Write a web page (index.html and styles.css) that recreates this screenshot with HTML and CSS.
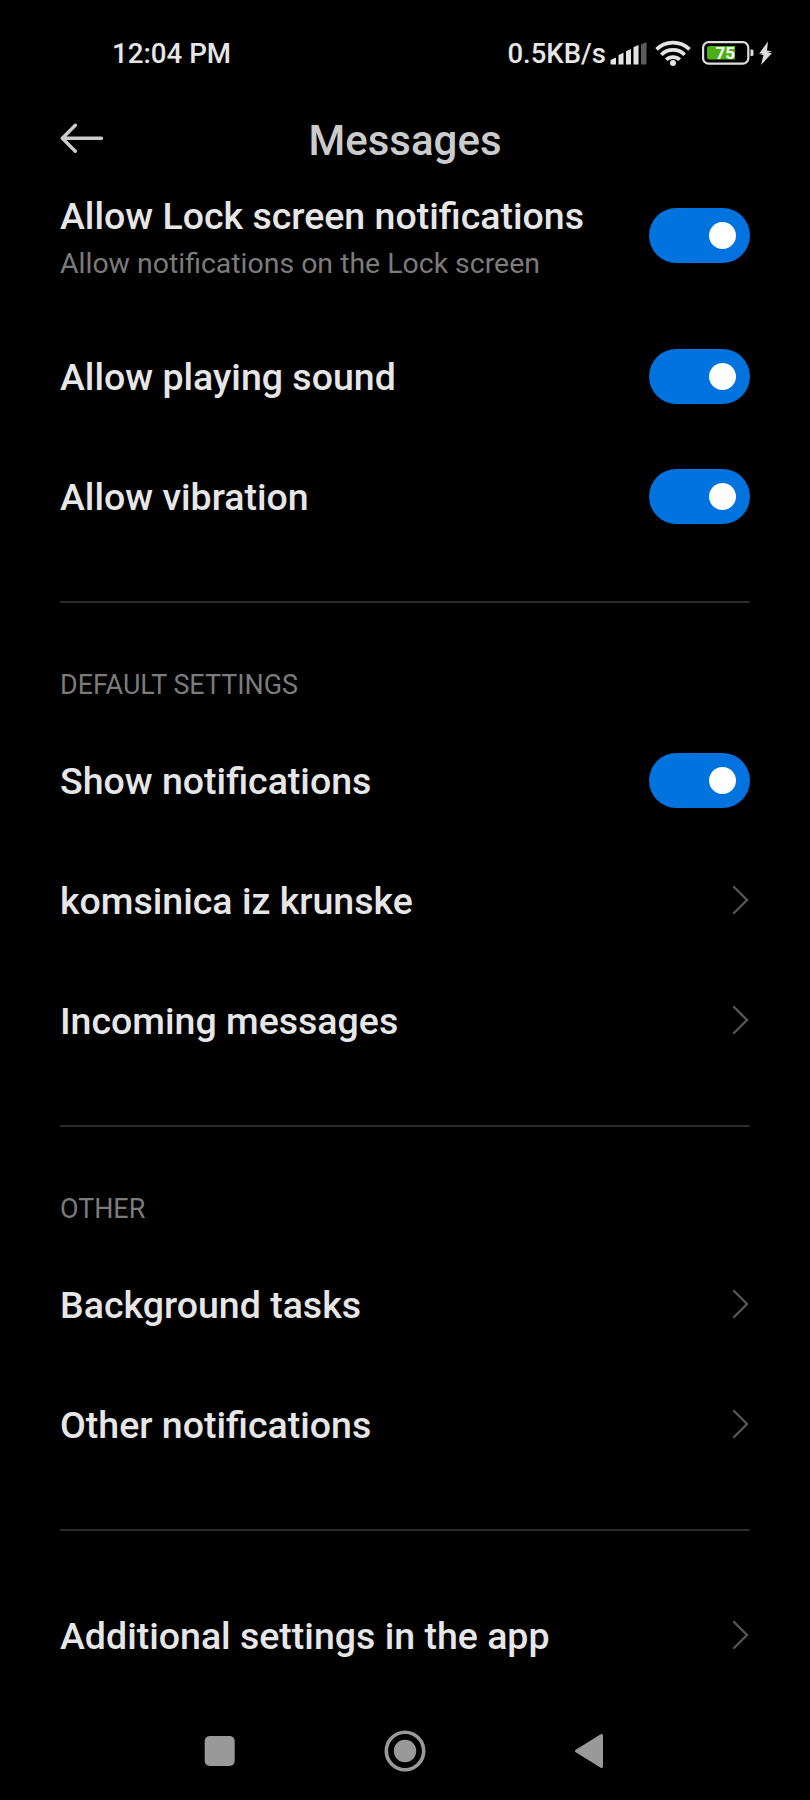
FILE: index.html
```html
<!DOCTYPE html>
<html lang="en">
<head>
<meta charset="utf-8">
<title>Messages</title>
<link rel="stylesheet" href="styles.css">
</head>
<body>
<div class="screen">
  <header class="status">
    <span class="clock">12:04 PM</span>
    <span class="speed">0.5KB/s</span>
    <svg class="signal" width="37" height="24" viewBox="0 0 37 24">
      <g fill="#e4e4e4">
        <path d="M.5 22.500v-3.500l5.500-2.500v7h-4.500a1 1 0 0 1-1-1z"/>
        <path d="M8.500 14l5-2.200v11.700h-5z"/>
        <path d="M16 10.200l5-2.200v15.500h-5z"/>
        <path d="M23.500 6.200l5-2.200v19.500h-5z"/>
      </g>
      <path fill="#5c5c5c" d="M31 3.500l4.500-2q1-.4 1 .8v20.200q0 1-1 1h-4.500z"/>
    </svg>
    <svg class="wifi" width="36" height="28" viewBox="0 0 36 28">
      <g fill="none" stroke="#e4e4e4" stroke-width="3.700">
        <path d="M1.500 10.400a23.500 23.500 0 0 1 33 0"/>
        <path d="M6.300 15.700a16.600 16.600 0 0 1 23.400 0"/>
        <path d="M11.300 20.800a9.500 9.500 0 0 1 13.400 0"/>
      </g>
      <circle cx="18" cy="24" r="3" fill="#e4e4e4"/>
    </svg>
    <svg class="battery" width="72" height="28" viewBox="0 0 72 28">
      <rect x="3.100" y="3.100" width="45.200" height="21.600" rx="5.500" fill="none" stroke="#dedede" stroke-width="2.200"/>
      <path d="M9.500 7h25.500v13.500h-25.500q-2.500 0-2.500-2.500v-8.500q0-2.500 2.500-2.500z" fill="#4caf13"/>
      <text x="25.200" y="20" text-anchor="middle" class="level">75</text>
      <path d="M50.500 10.500h1.500q1.500 0 1.500 1.500v3.500q0 1.500-1.500 1.500h-1.500z" fill="#dedede"/>
      <path d="M68 2.500l-8.500 11.500h4l-5 .8 5 1.200-2.500 10 11-12h-4.500l4.500-1.500-5-1z" fill="#dedede"/>
    </svg>
  </header>

  <div class="bar">
    <svg class="back" width="44" height="32" viewBox="0 0 44 32">
      <path d="M15.300 2.300L2.300 15.300L15.300 28.300M2.300 15.300H41.500" fill="none" stroke="#cbcbcb" stroke-width="3.400" stroke-linecap="round" stroke-linejoin="round"/>
    </svg>
    <h1 class="title">Messages</h1>
  </div>

  <main class="list">
    <section class="group">
      <div class="row row-tall">
        <div class="label">
          <div>Allow Lock screen notifications</div>
          <div class="note">Allow notifications on the Lock screen</div>
        </div>
        <span class="toggle"></span>
      </div>
      <div class="row"><div class="label">Allow playing sound</div><span class="toggle"></span></div>
      <div class="row"><div class="label">Allow vibration</div><span class="toggle"></span></div>
    </section>

    <section class="group">
      <h2 class="heading">DEFAULT SETTINGS</h2>
      <div class="row"><div class="label">Show notifications</div><span class="toggle"></span></div>
      <div class="row"><div class="label">komsinica iz krunske</div><svg class="chevron" viewBox="0 0 18 30"><path d="M2 2l13 13-13 13"/></svg></div>
      <div class="row"><div class="label">Incoming messages</div><svg class="chevron" viewBox="0 0 18 30"><path d="M2 2l13 13-13 13"/></svg></div>
    </section>

    <section class="group">
      <h2 class="heading">OTHER</h2>
      <div class="row"><div class="label">Background tasks</div><svg class="chevron" viewBox="0 0 18 30"><path d="M2 2l13 13-13 13"/></svg></div>
      <div class="row"><div class="label">Other notifications</div><svg class="chevron" viewBox="0 0 18 30"><path d="M2 2l13 13-13 13"/></svg></div>
    </section>

    <section class="group">
      <div class="row"><div class="label">Additional settings in the app</div><svg class="chevron" viewBox="0 0 18 30"><path d="M2 2l13 13-13 13"/></svg></div>
    </section>
  </main>

  <nav class="nav">
    <svg width="42" height="42" viewBox="0 0 42 42"><rect x="5.700" y="6" width="30" height="30" rx="5"/></svg>
    <svg width="42" height="42" viewBox="0 0 42 42"><circle cx="21" cy="21" r="18.700" fill="none" stroke="#999" stroke-width="3.600"/><circle cx="21" cy="21" r="11.200"/></svg>
    <svg width="42" height="42" viewBox="0 0 42 42"><path d="M7.500 21L32.500 5.500V36.500Z" stroke="#999" stroke-width="3" stroke-linejoin="round"/></svg>
  </nav>
</div>
</body>
</html>
```
FILE: styles.css
```css
* { box-sizing: border-box; }

body {
  margin: 0;
  background: #000;
  color: #e6e6e6;
  font-family: Roboto, "Liberation Sans", sans-serif;
}

svg { display: block; flex: none; }

.screen {
  display: flex;
  flex-direction: column;
  width: 810px;
  height: 1800px;
  overflow: hidden;
}

.status {
  display: flex;
  align-items: center;
  height: 90px;
  padding: 16px 38px 0 112px;
  font-size: 27.700px;
  font-weight: 500;
  line-height: 32px;
  white-space: nowrap;
}

.clock,
.speed { padding-top: 2px; }

.speed { margin-left: auto; margin-right: 4px; font-size: 27.500px; }
.signal { margin-right: 8px; }
.wifi { margin-right: 9px; }
.level { font-size: 17px; font-weight: 700; fill: #fff; }

.bar {
  display: grid;
  grid-template-columns: 100px 1fr 100px;
  align-items: center;
  height: 100px;
  padding: 0 60px;
}

.back { margin-top: -3px; }

.title {
  margin: 0;
  padding-top: 2px;
  color: #cbcbcb;
  font-size: 42px;
  font-weight: 500;
  line-height: 50px;
  text-align: center;
}

.list { flex: none; padding: 0 60px; }

.group + .group {
  margin-top: 45px;
  border-top: 2px solid #2b2b2b;
}

.group:last-child { padding-top: 44px; }

.heading {
  height: 117px;
  margin: 0;
  padding-top: 66px;
  color: #7b7b7b;
  font-size: 26.900px;
  font-weight: 400;
  line-height: 32px;
}

.row {
  display: flex;
  align-items: center;
  justify-content: space-between;
  height: 120px;
}

.row-tall { height: 91px; margin-bottom: 35px; }

.label {
  padding-top: 1px;
  font-size: 37.500px;
  font-weight: 500;
  line-height: 46px;
}

.row-tall .label { padding-top: 10px; }

.note {
  color: #7b7b7b;
  font-size: 28.450px;
  font-weight: 400;
  line-height: 49px;
}

.toggle {
  display: flex;
  align-items: center;
  justify-content: flex-end;
  width: 101px;
  height: 55px;
  padding-right: 14px;
  border-radius: 28px;
  background: #0073de;
}

.toggle::after {
  content: "";
  width: 27px;
  height: 27px;
  border-radius: 50%;
  background: #fff;
}

.chevron {
  width: 18px;
  height: 30px;
  fill: none;
  stroke: #555;
  stroke-width: 2.400;
  stroke-linecap: round;
}

.nav {
  display: flex;
  justify-content: space-between;
  align-items: center;
  margin-top: auto;
  height: 98px;
  padding: 0 199px;
  fill: #999;
}
```
